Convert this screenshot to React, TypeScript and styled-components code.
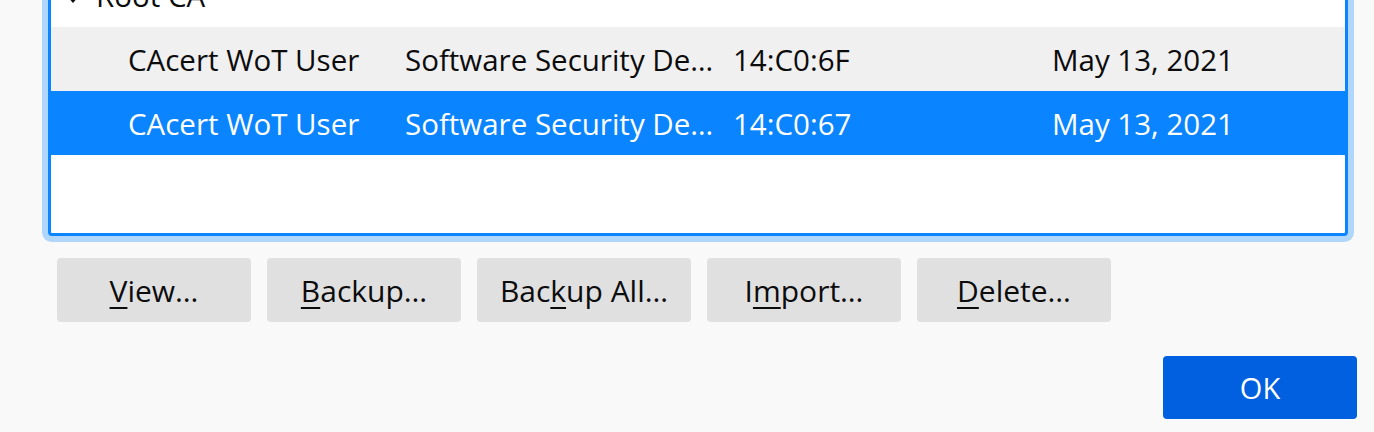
import React from "react";
import styled, { createGlobalStyle } from "styled-components";

const Global = createGlobalStyle`
  html, body { margin: 0; padding: 0; }
  body {
    background: #f9f9fa;
    font-family: "Open Sans", "Noto Sans", sans-serif;
    color: #0c0c0d;
    overflow: hidden;
  }
`;

const Page = styled.div`
  width: 1374px;
  height: 432px;
  display: flex;
  flex-direction: column;
  overflow: hidden;
`;

const TreeFrame = styled.div`
  margin: -40px 26px 0 48px;
  border: 3px solid #0a84ff;
  border-radius: 4px;
  box-shadow: 0 0 0 6px #b1d6fb;
  background: #fff;
  height: 270px;
  overflow: hidden;
`;

const Row = styled.div<{ $variant?: "odd" | "selected" | "plain" }>`
  display: grid;
  grid-template-columns: 354px 328px 319px 1fr;
  align-items: center;
  height: 64px;
  font-size: 29.5px;
  white-space: nowrap;
  background: ${(p) =>
    p.$variant === "selected" ? "#0a84ff" : p.$variant === "odd" ? "#f0f0f0" : "#fff"};
  color: ${(p) => (p.$variant === "selected" ? "#fff" : "#0c0c0d")};
`;

const Cell = styled.div<{ $indent?: number }>`
  padding-left: ${(p) => p.$indent ?? 0}px;
  overflow: hidden;
  display: flex;
  align-items: center;
`;

const Twisty = styled.svg`
  width: 20px;
  height: 20px;
  margin-left: 12px;
  margin-right: 13px;
  flex: none;
`;

const ButtonRow = styled.div`
  display: flex;
  gap: 16px;
  margin: 22px 0 0 57px;
`;

const Button = styled.button<{ $w?: number }>`
  width: ${(p) => p.$w ?? 194}px;
  height: 64px;
  border: none;
  border-radius: 4px;
  background: #e0e0e1;
  color: #0c0c0d;
  font-family: inherit;
  font-size: 30px;
  padding: 0;
  display: flex;
  align-items: center;
  justify-content: center;
`;

const Key = styled.span`
  text-decoration: underline;
  text-decoration-thickness: 2px;
  text-underline-offset: 5px;
`;

const Footer = styled.div`
  display: flex;
  justify-content: flex-end;
  margin: 34px 17px 0 0;
`;

const PrimaryButton = styled(Button)`
  background: #0060df;
  color: #fff;
  height: 63px;
  font-size: 29px;
`;

const certs = [
  { name: "CAcert WoT User", dev: "Software Security De…", serial: "14:C0:6F", exp: "May 13, 2021", v: "odd" as const },
  { name: "CAcert WoT User", dev: "Software Security De…", serial: "14:C0:67", exp: "May 13, 2021", v: "selected" as const },
];

export default function App() {
  return (
    <Page>
      <Global />
      <TreeFrame>
        <Row $variant="plain">
          <Cell>
            <Twisty viewBox="0 0 20 20">
              <path d="M4 11 L16 11 L10 18 Z" fill="#0c0c0d" />
            </Twisty>
            Root CA
          </Cell>
          <Cell />
          <Cell />
          <Cell />
        </Row>
        {certs.map((c, i) => (
          <Row key={i} $variant={c.v}>
            <Cell $indent={77}>{c.name}</Cell>
            <Cell>{c.dev}</Cell>
            <Cell>{c.serial}</Cell>
            <Cell>{c.exp}</Cell>
          </Row>
        ))}
      </TreeFrame>
      <ButtonRow>
        <Button><span><Key>V</Key>iew…</span></Button>
        <Button><span><Key>B</Key>ackup…</span></Button>
        <Button $w={214}><span>Bac<Key>k</Key>up All…</span></Button>
        <Button><span>I<Key>m</Key>port…</span></Button>
        <Button><span><Key>D</Key>elete…</span></Button>
      </ButtonRow>
      <Footer>
        <PrimaryButton>OK</PrimaryButton>
      </Footer>
    </Page>
  );
}
